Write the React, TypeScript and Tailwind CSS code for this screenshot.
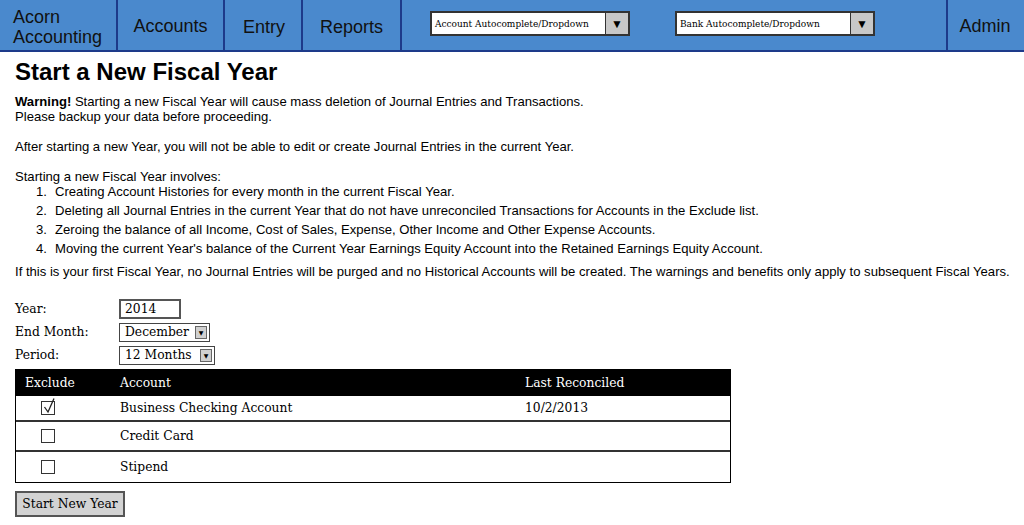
import React from 'react';

// Wireframe: Start a New Fiscal Year

const sans = { fontFamily: '"Liberation Sans", Arial, sans-serif' };
const serif = { fontFamily: '"DejaVu Serif", serif' };

const steps = [
  'Creating Account Histories for every month in the current Fiscal Year.',
  'Deleting all Journal Entries in the current Year that do not have unreconciled Transactions for Accounts in the Exclude list.',
  'Zeroing the balance of all Income, Cost of Sales, Expense, Other Income and Other Expense Accounts.',
  "Moving the current Year's balance of the Current Year Earnings Equity Account into the Retained Earnings Equity Account.",
];

const accounts = [
  { name: 'Business Checking Account', reconciled: '10/2/2013', excluded: true },
  { name: 'Credit Card', reconciled: '', excluded: false },
  { name: 'Stipend', reconciled: '', excluded: false },
];

function NavDropdown({ label }: { label: string }) {
  return (
    <div className="flex h-[25px] w-[200px] border-2 border-[#333] bg-white">
      <div className="flex flex-1 items-center pl-[3px] text-[9px] text-black" style={serif}>
        {label}
      </div>
      <div className="flex w-[23px] items-center justify-center border-l border-[#333] bg-[#c8c8c8] text-[12px] text-black">
        ▼
      </div>
    </div>
  );
}

function SmallSelect({ value, width }: { value: string; width: string }) {
  return (
    <div className={`flex h-[19px] border border-[#444] bg-white ${width}`}>
      <div className="flex flex-1 items-center pl-[5px]">{value}</div>
      <div className="my-[2px] mr-[2px] flex w-[12px] items-center justify-center border border-[#666] bg-[#d0d0d0] text-[6px]">
        ▼
      </div>
    </div>
  );
}

function Checkbox({ checked }: { checked: boolean }) {
  return (
    <div className="relative h-[14px] w-[14px] border border-[#333] bg-white">
      {checked && (
        <svg className="absolute -top-[4px] left-[1px]" width="14" height="16" viewBox="0 0 14 16">
          <path d="M1.5 9 L5 14 L11 0.5" fill="none" stroke="#222" strokeWidth="1.3" />
        </svg>
      )}
    </div>
  );
}

export default function App() {
  return (
    <div className="min-h-[525px] w-[1024px] overflow-hidden bg-white text-black" style={sans}>
      {/* top nav */}
      <div className="flex h-[52px] border-b-2 border-[#1d3a8a] bg-[#4a89cd] text-[18px] leading-[20px] text-[#111]">
        <div className="flex w-[118px] items-center border-r-2 border-[#1d3a8a] pl-[13px] pt-[4px]">
          Acorn
          <br />
          Accounting
        </div>
        <div className="flex w-[107px] items-center justify-center border-r-2 border-[#1d3a8a] pt-[2px]">Accounts</div>
        <div className="flex w-[78px] items-center justify-center border-r-2 border-[#1d3a8a] pt-[4px] pl-[2px]">Entry</div>
        <div className="flex w-[99px] items-center justify-center border-r-2 border-[#1d3a8a] pt-[4px]">Reports</div>
        <div className="flex flex-1 items-start gap-[45px] border-r-2 border-[#1d3a8a] pl-[28px] pt-[11px]">
          <NavDropdown label="Account Autocomplete/Dropdown" />
          <NavDropdown label="Bank Autocomplete/Dropdown" />
        </div>
        <div className="flex w-[76px] items-center justify-center pt-[2px] pr-[2px]">Admin</div>
      </div>

      <div className="px-[15px]">
        <h1 className="mt-[6px] text-[24px] font-bold leading-[28px]">Start a New Fiscal Year</h1>

        <div className="mt-[8px] text-[13.1px] leading-[15px]">
          <p>
            <b>Warning!</b> Starting a new Fiscal Year will cause mass deletion of Journal Entries and Transactions.
            <br />
            Please backup your data before proceeding.
          </p>
          <p className="mt-[15px]">
            After starting a new Year, you will not be able to edit or create Journal Entries in the current Year.
          </p>
          <p className="mt-[15px]">Starting a new Fiscal Year involves:</p>
          <div className="flex flex-col gap-[4px]">
            {steps.map((s, i) => (
              <div key={i} className="flex">
                <span className="w-[32px] text-right">{i + 1}.</span>
                <span className="ml-[8px]">{s}</span>
              </div>
            ))}
          </div>
          <p className="mt-[8px] whitespace-nowrap">
            If this is your first Fiscal Year, no Journal Entries will be purged and no Historical Accounts will be
            created. The warnings and benefits only apply to subsequent Fiscal Years.
          </p>
        </div>

        {/* form */}
        <div className="mt-[20px] flex flex-col gap-[3px] text-[12.3px]" style={serif}>
          <div className="flex h-[20px] items-center">
            <span className="w-[104px]">Year:</span>
            <div className="flex h-[20px] w-[62px] items-center border-2 border-[#555] pl-[4px]">2014</div>
          </div>
          <div className="flex h-[20px] items-center">
            <span className="w-[104px]">End Month:</span>
            <SmallSelect value="December" width="w-[91px]" />
          </div>
          <div className="flex h-[20px] items-center">
            <span className="w-[104px]">Period:</span>
            <SmallSelect value="12 Months" width="w-[96px]" />
          </div>
        </div>

        {/* accounts table */}
        <div className="mt-[4px] w-[716px] border border-black text-[12.3px]" style={serif}>
          <div className="flex h-[26px] items-center bg-black text-white">
            <span className="w-[104px] pl-[9px]">Exclude</span>
            <span className="w-[405px]">Account</span>
            <span>Last Reconciled</span>
          </div>
          {accounts.map((a, i) => (
            <div
              key={a.name}
              className={`flex items-center ${i === 0 ? 'h-[26px]' : 'h-[30px]'} ${
                i < accounts.length - 1 ? 'border-b-2 border-[#333]' : ''
              }`}
            >
              <div className="flex w-[104px] pl-[25px]">
                <Checkbox checked={a.excluded} />
              </div>
              <span className="w-[405px]">{a.name}</span>
              <span>{a.reconciled}</span>
            </div>
          ))}
        </div>

        <button
          className="mt-[8px] flex h-[26px] w-[110px] items-center justify-center border-2 border-[#555] bg-[#d3d3d3] text-[12.3px]"
          style={serif}
        >
          Start New Year
        </button>
      </div>
    </div>
  );
}
